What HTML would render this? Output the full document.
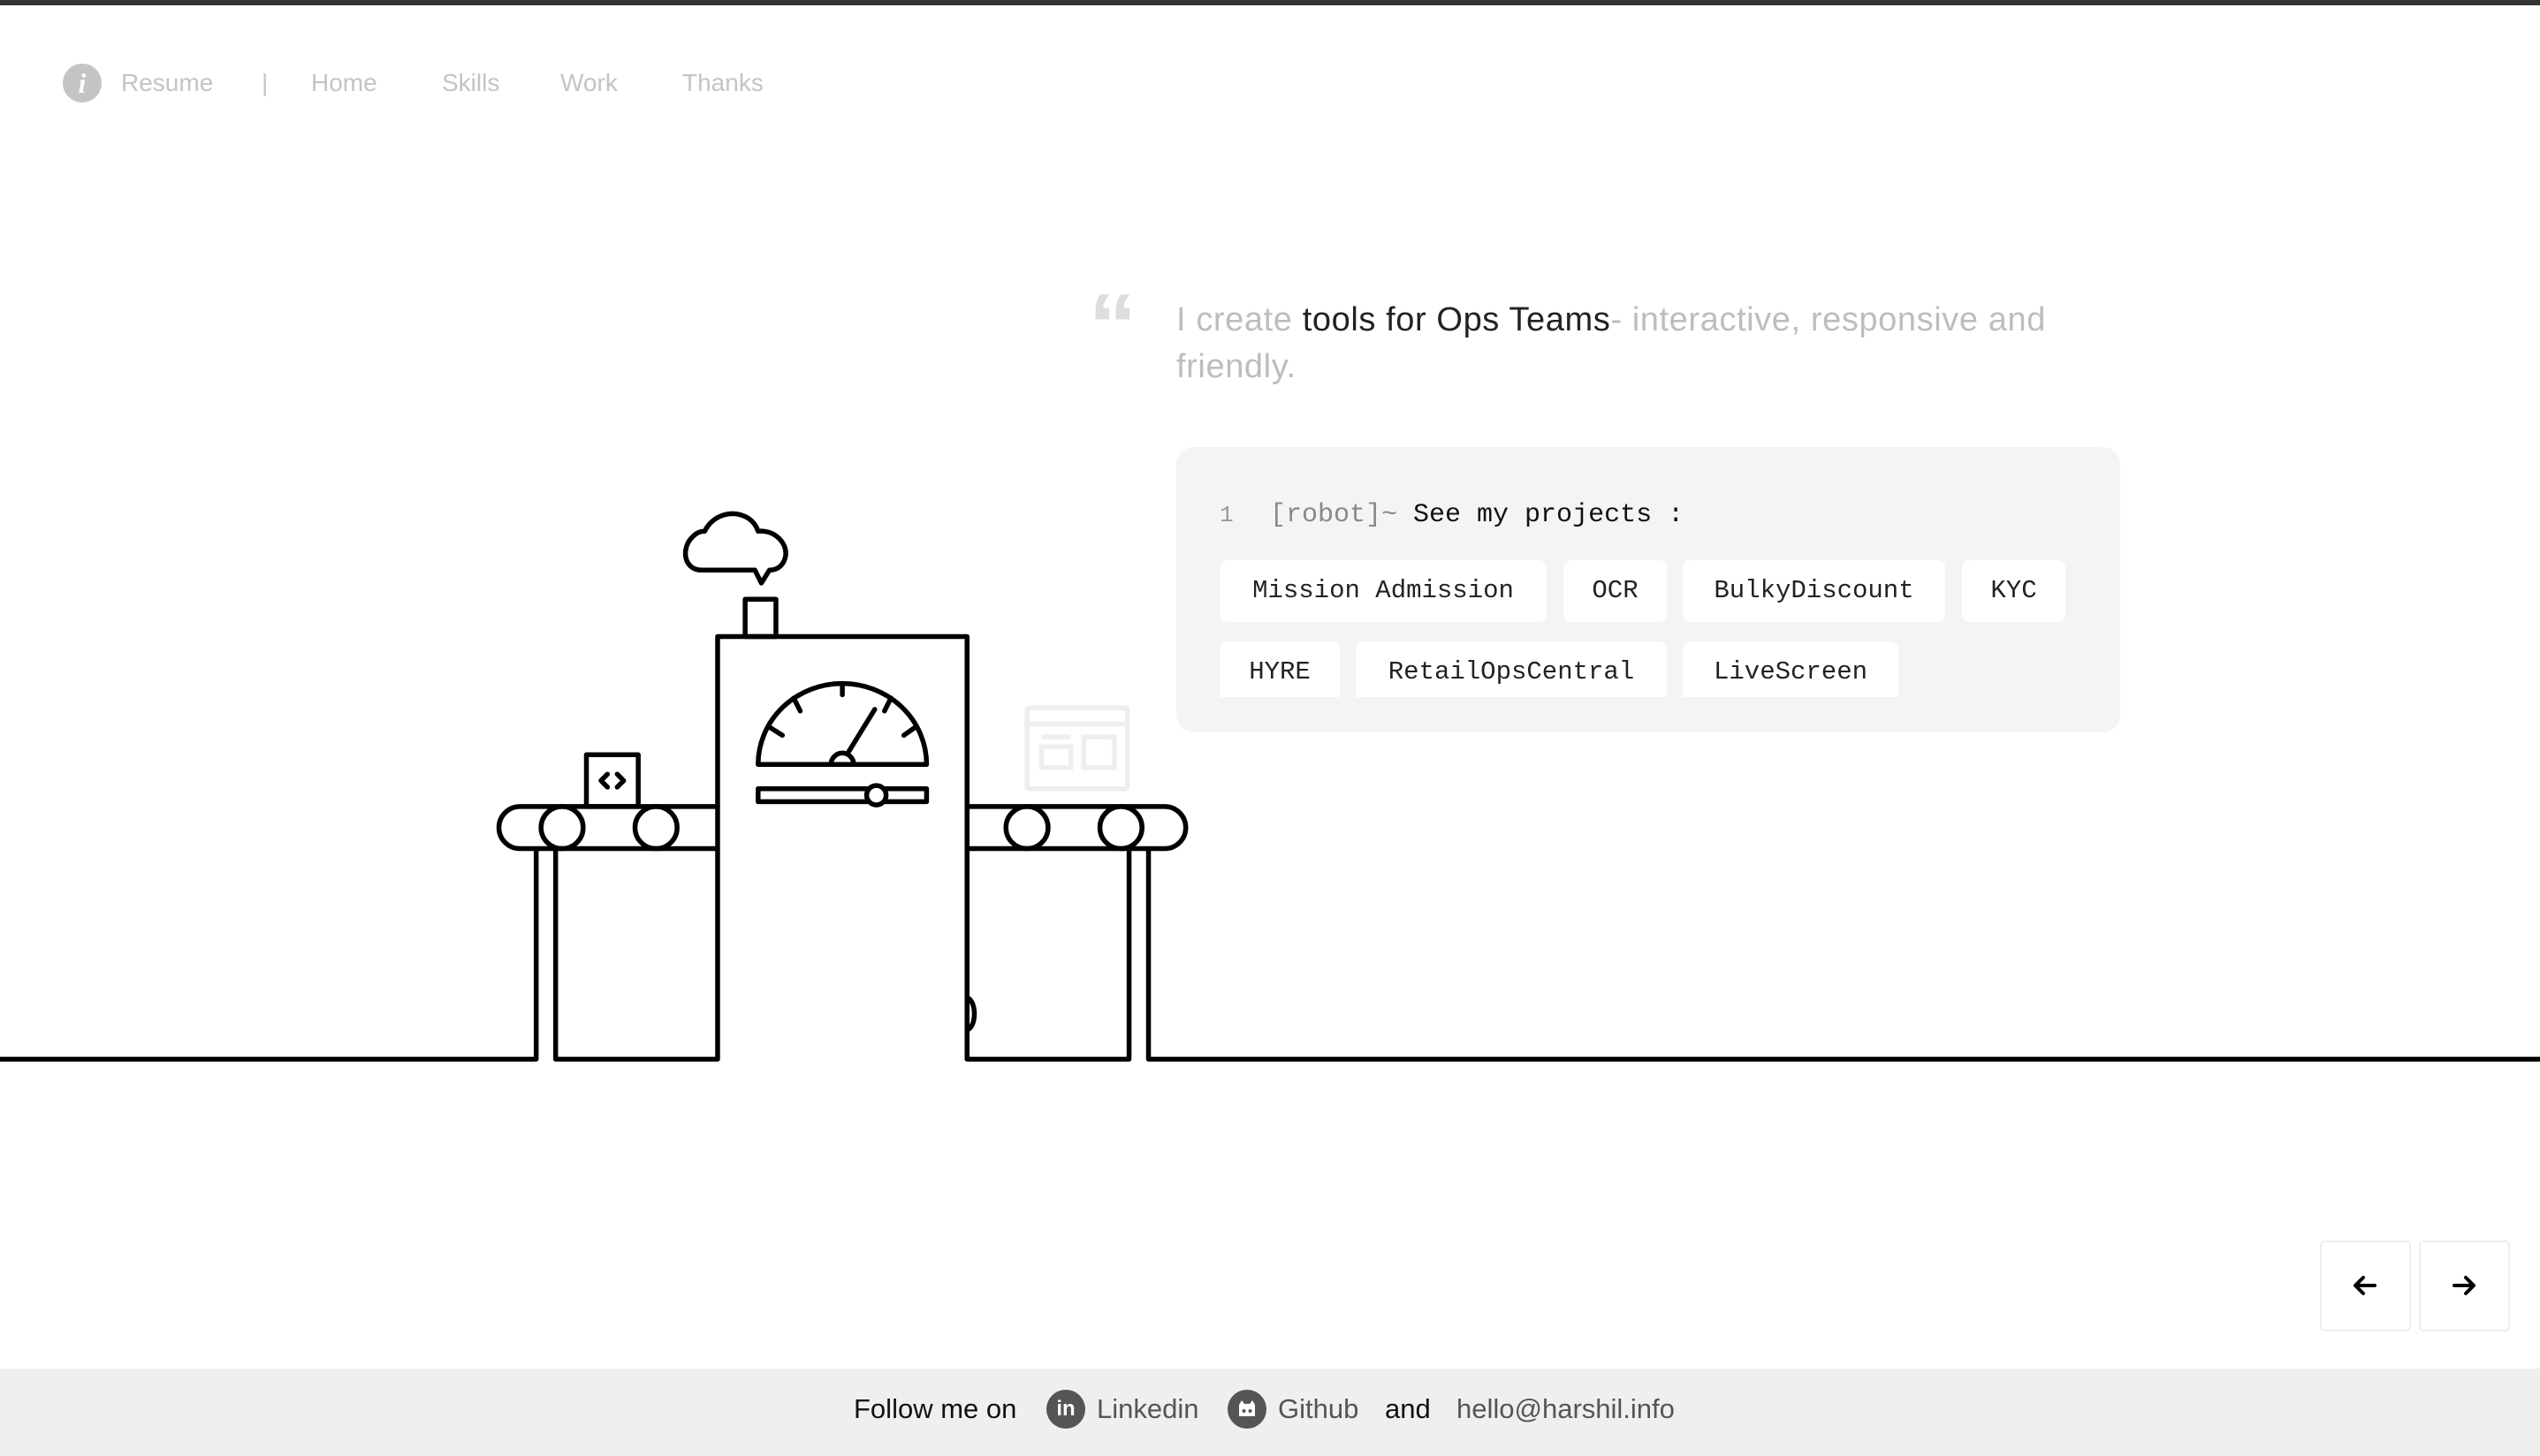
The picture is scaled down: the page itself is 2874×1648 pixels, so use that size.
<!DOCTYPE html>
<html><head><meta charset="utf-8">
<style>
*{margin:0;padding:0;box-sizing:border-box}
html,body{width:2874px;height:1648px;overflow:hidden;background:#fff;font-family:"Liberation Sans",sans-serif}
.topbar{position:absolute;left:0;top:0;width:2874px;height:6px;background:#333}
.nav{position:absolute;top:76px;font-size:28px;color:#c4c4c4;line-height:36px}
.info{position:absolute;left:71px;top:72px;width:44px;height:44px;border-radius:50%;background:#c4c4c4;color:#fff;font:italic bold 32px "Liberation Serif",serif;text-align:center;line-height:44px}
.q{position:absolute;left:1234px;top:318px;font:bold 100px "Liberation Sans",sans-serif;color:#ddd;line-height:100px;transform:scaleX(1.1)}
.lead{position:absolute;left:1331px;top:336px;width:1040px;font-size:38px;letter-spacing:0.6px;line-height:53px;color:#bdbdbd}
.lead b{font-weight:normal;color:#222}
.code{position:absolute;left:1331px;top:506px;width:1068px;height:323px;background:#f4f4f4;border-radius:20px;overflow:hidden}
.mono{font-family:"Liberation Mono",monospace;font-size:30px}
.chip{position:absolute;height:70px;background:#fff;border-radius:9px;line-height:70px;text-align:center;color:#222;font-family:"Liberation Mono",monospace;font-size:29px}
.btn{position:absolute;top:1404px;width:103px;height:103px;border:2px solid #eee;border-radius:5px;background:#fff}
.foot{position:absolute;left:0;top:1549px;width:2874px;height:99px;background:#efefef}
.ft{position:absolute;top:1576px;font-size:31px;line-height:38px;color:#555}
.ic{position:absolute;top:1573px;width:44px;height:44px;border-radius:50%;background:#555;color:#fff;font-weight:bold;font-size:24px;text-align:center;line-height:44px}
</style></head><body>
<div class="topbar"></div>
<div class="info">i</div>
<div class="nav" style="left:137px">Resume</div>
<div class="nav" style="left:296px">|</div>
<div class="nav" style="left:352px">Home</div>
<div class="nav" style="left:500px">Skills</div>
<div class="nav" style="left:634px">Work</div>
<div class="nav" style="left:772px">Thanks</div>

<div class="q">&ldquo;</div>
<div class="lead">I create <b>tools for Ops Teams</b>- interactive, responsive and friendly.</div>

<div class="code">
  <div class="mono" style="position:absolute;left:49px;top:62px;font-size:26px;color:#999">1</div>
  <div class="mono" style="position:absolute;left:106px;top:60px;color:#888">[robot]~ <span style="color:#111">See my projects :</span></div>
</div>
<div class="chip" style="left:1380px;top:634px;width:370px">Mission Admission</div>
<div class="chip" style="left:1769px;top:634px;width:117px">OCR</div>
<div class="chip" style="left:1904px;top:634px;width:297px">BulkyDiscount</div>
<div class="chip" style="left:2220px;top:634px;width:117px">KYC</div>
<div class="chip" style="left:1380px;top:726px;width:136px;height:63px;border-radius:9px 9px 0 0">HYRE</div>
<div class="chip" style="left:1534px;top:726px;width:352px;height:63px;border-radius:9px 9px 0 0">RetailOpsCentral</div>
<div class="chip" style="left:1904px;top:726px;width:244px;height:63px;border-radius:9px 9px 0 0">LiveScreen</div>

<svg style="position:absolute;left:0;top:0" width="2874" height="1648" viewBox="0 0 1568 899">
 <g fill="none" stroke="#eee" stroke-width="3">
  <rect x="634" y="437" width="62" height="50" rx="1"/>
  <line x1="634" y1="447" x2="696" y2="447"/>
  <rect x="643" y="461" width="18" height="13"/>
  <line x1="643" y1="455" x2="661" y2="455"/>
  <rect x="669" y="455" width="19" height="19"/>
 </g>
 <g fill="none" stroke="#000" stroke-width="3" stroke-linejoin="round" stroke-linecap="round">
  <polyline points="0,654 331,654 331,524" stroke-linecap="butt"/>
  <polyline points="343,524 343,654 443,654 443,393 597,393 597,654 697,654 697,524"/>
  <polyline points="709,524 709,654 1568,654" stroke-linecap="butt"/>
  <path d="M443,498 H321 A13,13 0 0 0 321,524 H443"/>
  <path d="M597,498 H719 A13,13 0 0 1 719,524 H597"/>
  <ellipse cx="347" cy="511" rx="13" ry="13"/>
  <ellipse cx="405" cy="511" rx="13" ry="13"/>
  <ellipse cx="634" cy="511" rx="13" ry="13"/>
  <ellipse cx="692" cy="511" rx="13" ry="13"/>
  <rect x="362" y="466" width="32" height="32"/>
  <polyline points="375,478 371,482 375,486"/>
  <polyline points="381,478 385,482 381,486"/>
  <rect x="460" y="370" width="19" height="23"/>
  <path d="M433,352 C422,352 420,338 428,331 C430,329 432,328 435,328 C440,318 452,314 462,320 C465,322 467,325 468,328 C478,327 486,335 485,343 C484,349 480,352 475,352 L470,360 L466,352 Z"/>
  <path d="M468,472 A52,50 0 0 1 572,472 Z"/>
  <line x1="475" y1="449" x2="483" y2="454"/>
  <line x1="490" y1="431" x2="494" y2="439"/>
  <line x1="520" y1="423" x2="520" y2="429"/>
  <line x1="550" y1="431" x2="546" y2="439"/>
  <line x1="565" y1="449" x2="558" y2="454"/>
  <line x1="524" y1="464" x2="540" y2="438"/>
  <path d="M513,472 A7,7 0 0 1 527,472"/>
  <rect x="468" y="487" width="104" height="8"/>
  <circle cx="541" cy="491" r="6" fill="#fff"/>
  <path d="M597,616 C603,618 603,634 597,636"/>
 </g>
</svg>

<div class="btn" style="left:2625px"><svg width="103" height="103" viewBox="0 0 103 103" style="position:absolute;left:-2px;top:-2px"><path d="M62,51 H40 M49,42 L40,51 L49,60" fill="none" stroke="#000" stroke-width="4" stroke-linecap="round" stroke-linejoin="round"/></svg></div>
<div class="btn" style="left:2737px"><svg width="103" height="103" viewBox="0 0 103 103" style="position:absolute;left:-2px;top:-2px"><path d="M40,51 H62 M53,42 L62,51 L53,60" fill="none" stroke="#000" stroke-width="4" stroke-linecap="round" stroke-linejoin="round"/></svg></div>

<div class="foot"></div>
<div class="ft" style="left:966px;color:#111">Follow me on</div>
<div class="ic" style="left:1184px">in</div>
<div class="ft" style="left:1241px">Linkedin</div>
<div class="ic" style="left:1389px"><svg width="44" height="44" viewBox="0 0 44 44" style="position:absolute;left:0;top:0"><path d="M13,30 V17 L16,12 L19,16 H25 L28,12 L31,17 V30 Z" fill="#fff"/><circle cx="18.5" cy="24" r="2" fill="#555"/><circle cx="25.5" cy="24" r="2" fill="#555"/></svg></div>
<div class="ft" style="left:1446px">Github</div>
<div class="ft" style="left:1567px;color:#111">and</div>
<div class="ft" style="left:1648px">hello@harshil.info</div>
</body></html>
